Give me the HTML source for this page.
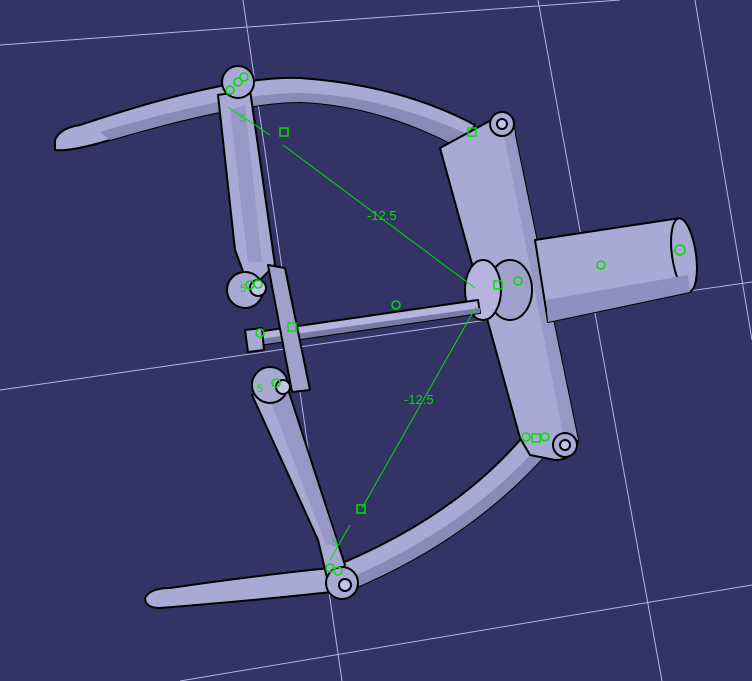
<!DOCTYPE html>
<html><head><style>html,body{margin:0;padding:0;background:#333366;overflow:hidden}svg{display:block}</style></head>
<body>
<svg width="752" height="681" viewBox="0 0 752 681" xmlns="http://www.w3.org/2000/svg">
<rect width="752" height="681" fill="#333366"/>
<g stroke="#b4b4e8" stroke-width="1" fill="none">
<line x1="0" y1="45" x2="620" y2="0"/>
<line x1="0" y1="390" x2="752" y2="282"/>
<line x1="180" y1="681" x2="752" y2="585"/>
<line x1="243" y1="0" x2="342" y2="681"/>
<line x1="538" y1="0" x2="662" y2="681"/>
<line x1="695" y1="0" x2="752" y2="340"/>
</g>
<g stroke="#000" stroke-width="2" stroke-linejoin="round">
<path d="M55,140 Q60,128 80,125 Q230,75 300,78 Q400,85 475,125 L460,148 Q380,105 300,102 Q240,102 110,140 Q70,152 55,150 Z" fill="#a9a9d6"/>
<path d="M110,140 Q240,102 300,102 Q380,105 460,148 L470,135 Q380,95 300,93 Q230,93 100,132 Z" fill="#8a8ab8" stroke="none"/>
<path d="M145,598 Q150,588 170,588 Q260,575 330,568 Q450,520 520,440 L548,452 Q470,540 350,590 Q260,600 160,608 Q145,608 145,598 Z" fill="#a9a9d6"/>
<path d="M340,582 Q460,532 535,450 L548,452 Q470,540 350,590 Z" fill="#8a8ab8" stroke="none"/>
<path d="M440,148 L495,118 Q515,118 515,135 L578,440 Q575,460 555,460 L530,455 L520,438 Z" fill="#a9a9d6"/>
<path d="M495,118 Q515,118 515,135 L578,440 L565,444 L505,140 Z" fill="#9898c6" stroke="none"/>
<circle cx="502" cy="124" r="12" fill="#a9a9d6"/><circle cx="502" cy="124" r="5" fill="#c4c4ea"/>
<circle cx="565" cy="445" r="12" fill="#a9a9d6"/><circle cx="565" cy="445" r="5" fill="#c4c4ea"/>
<path d="M535,240 L680,218 L690,292 L548,322 Z" fill="#a9a9d6"/>
<ellipse cx="684" cy="255" rx="12" ry="37" fill="#a9a9d6" transform="rotate(-8 684 255)"/>
<path d="M546,300 L688,275 L690,292 L548,322 Z" fill="#9090c0" stroke="none"/>
<ellipse cx="510" cy="290" rx="22" ry="30" fill="#a0a0cc"/>
<ellipse cx="483" cy="290" rx="18" ry="30" fill="#b4b4de"/>
<path d="M250,333 L478,300 L480,313 L252,346 Z" fill="#b4b4de"/>
<path d="M252,340 L480,308 L480,313 L252,346 Z" fill="#7a7aa8" stroke="none"/>
<path d="M218,95 L250,90 L275,265 L250,290 L235,250 Z" fill="#a9a9d6"/>
<path d="M230,110 L245,105 L262,262 L248,262 Z" fill="#9898c6" stroke="none"/>
<circle cx="238" cy="82" r="16" fill="#a9a9d6"/>
<circle cx="245" cy="290" r="18" fill="#a9a9d6"/><circle cx="258" cy="288" r="8" fill="#c4c4ea"/>
<path d="M268,265 L285,268 L310,390 L292,392 Z" fill="#a0a0cc"/>
<path d="M252,395 L285,380 L345,565 L330,590 L318,540 Z" fill="#a9a9d6"/>
<path d="M270,400 L288,395 L338,545 L326,545 Z" fill="#9898c6" stroke="none"/>
<circle cx="270" cy="385" r="18" fill="#a9a9d6"/><circle cx="283" cy="387" r="7" fill="#c4c4ea"/>
<circle cx="342" cy="583" r="16" fill="#a9a9d6"/><circle cx="345" cy="585" r="6" fill="#c4c4ea"/>
<path d="M245,330 L262,328 L264,350 L248,352 Z" fill="#a9a9d6"/>
</g>
<g stroke="#00e000" stroke-width="1.5" fill="none">
<line x1="283" y1="145" x2="475" y2="288" stroke-width="1"/>
<line x1="476" y1="307" x2="362" y2="508" stroke-width="1"/>
<line x1="228" y1="107" x2="270" y2="135" stroke-width="1"/>
<line x1="330" y1="560" x2="350" y2="525" stroke-width="1"/>
<rect x="280" y="128" width="8" height="8"/><rect x="357" y="505" width="8" height="8"/>
<rect x="494" y="281" width="8" height="8"/><rect x="532" y="434" width="8" height="8"/>
<rect x="468" y="128" width="8" height="8"/><rect x="288" y="323" width="8" height="8"/>
<circle cx="230" cy="90" r="4"/><circle cx="238" cy="82" r="4"/><circle cx="244" cy="77" r="4"/>
<circle cx="396" cy="305" r="4"/><circle cx="601" cy="265" r="4"/><circle cx="680" cy="250" r="5"/>
<circle cx="518" cy="281" r="4"/><circle cx="545" cy="437" r="4"/><circle cx="526" cy="437" r="4"/>
<circle cx="260" cy="333" r="4"/><circle cx="330" cy="568" r="4"/><circle cx="338" cy="571" r="4"/>
<circle cx="250" cy="285" r="4"/><circle cx="258" cy="284" r="4"/><circle cx="276" cy="383" r="4"/>
</g>
<g fill="#00e000" font-family="Liberation Sans, sans-serif" font-size="13">
<text x="367" y="220">-12.5</text>
<text x="404" y="404">-12.5</text>
<text x="240" y="122" font-size="11">5</text>
<text x="240" y="292" font-size="11">5</text>
<text x="257" y="392" font-size="11">5</text>
<text x="332" y="546" font-size="11">5</text>
</g>
</svg>
</body></html>
